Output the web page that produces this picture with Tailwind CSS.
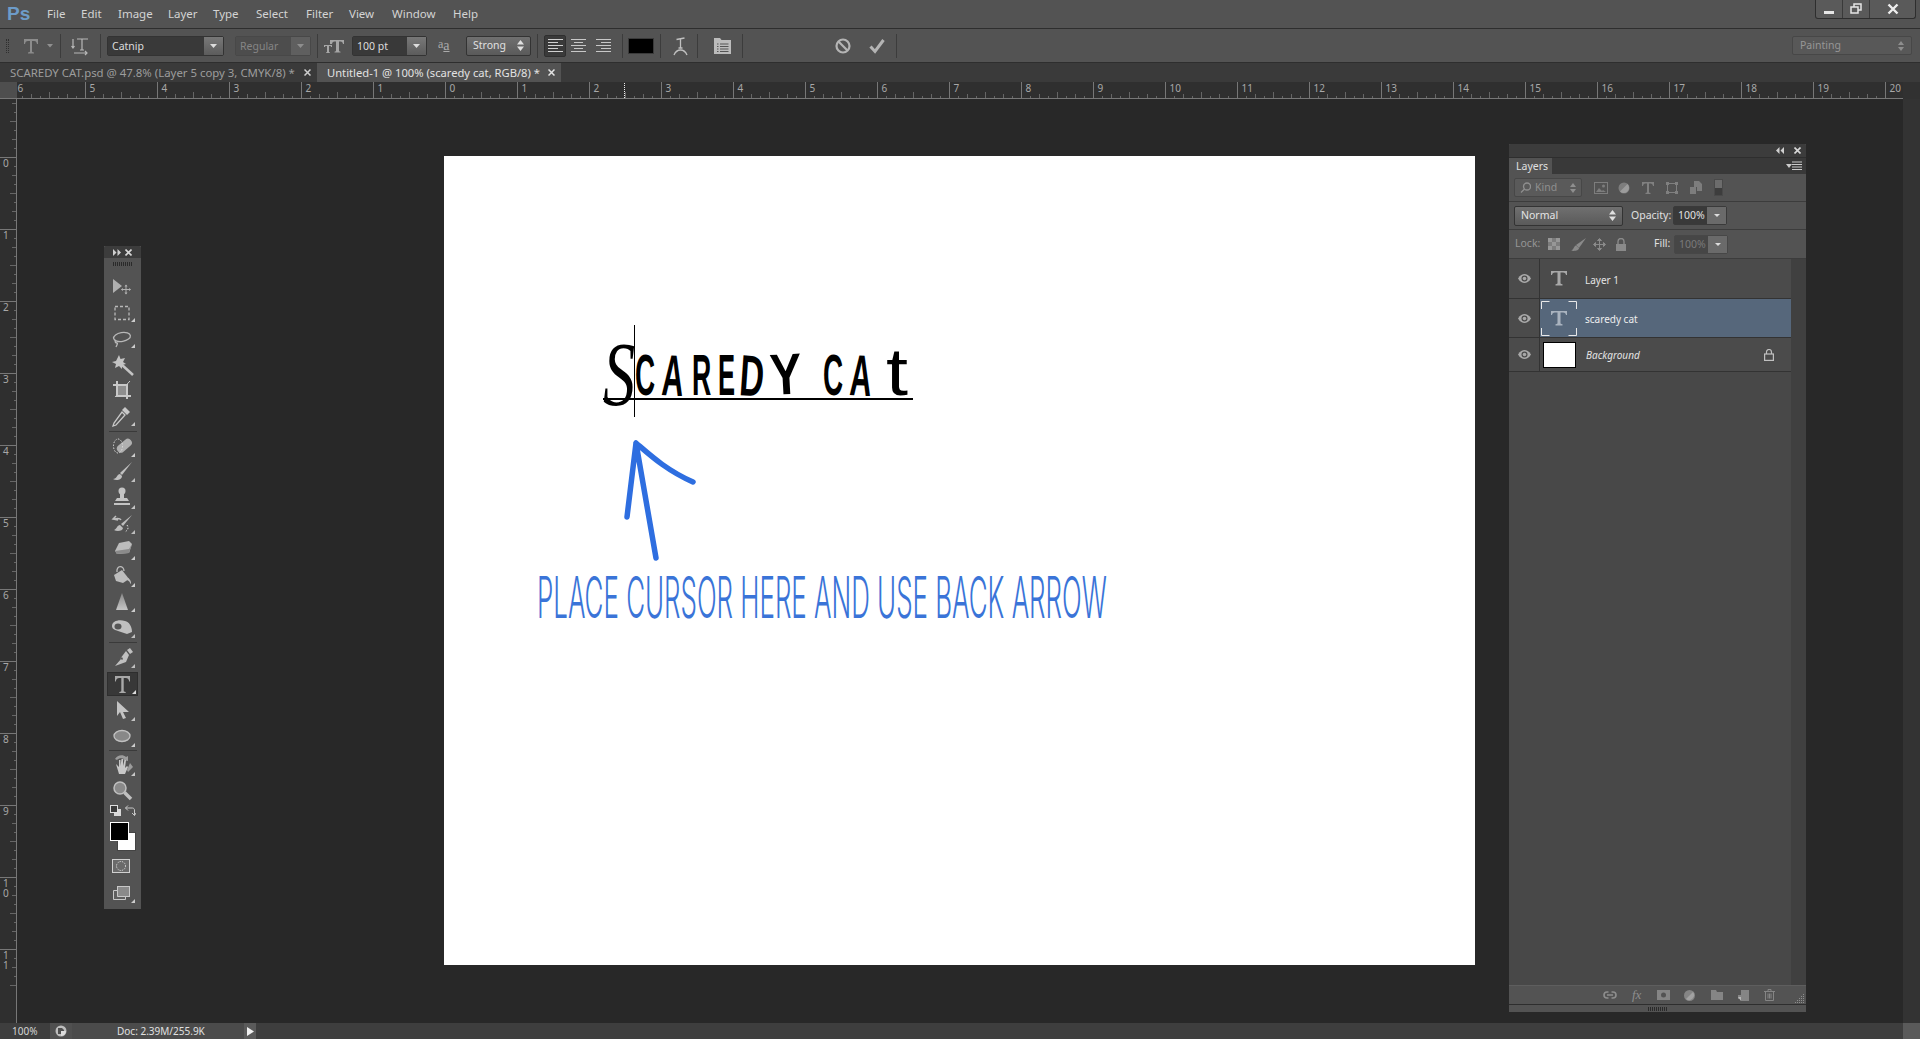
<!DOCTYPE html>
<html lang="en">
<head>
<meta charset="UTF-8">
<title>Photoshop</title>
<script src="https://cdn.jsdelivr.net/npm/@tailwindcss/browser@4"></script>
</head>
<body class="bg-[#282828] overflow-hidden">
<div class="relative w-[1920px] h-[1039px] flex flex-col overflow-hidden font-['Noto_Sans',sans-serif] text-[11px] text-[#d4d4d4]">

  <!-- menu bar -->
  <div class="h-[29px] flex items-center bg-[#535353] border-b border-[#2e2e2e] relative">
    <span class="w-[47px] pl-[7px] text-[19px] font-bold text-[#6d9cc9] font-['Liberation_Sans',sans-serif]">Ps</span>
    <span class="w-[34px] text-[11.5px]">File</span>
    <span class="w-[37px] text-[11.5px]">Edit</span>
    <span class="w-[50px] text-[11.5px]">Image</span>
    <span class="w-[45px] text-[11.5px]">Layer</span>
    <span class="w-[43px] text-[11.5px]">Type</span>
    <span class="w-[50px] text-[11.5px]">Select</span>
    <span class="w-[43px] text-[11.5px]">Filter</span>
    <span class="w-[43px] text-[11.5px]">View</span>
    <span class="w-[61px] text-[11.5px]">Window</span>
    <span class="text-[11.5px]">Help</span>
    <!-- window buttons -->
    <div class="absolute right-[4px] top-0 w-[101px] h-[19px] flex bg-[#5a5a5a] border border-t-0 border-[#2e2e2e] rounded-b-[3px]">
      <div class="w-[27px] flex items-center justify-center border-r border-[#3a3a3a]"><svg width="12" height="12"><rect x="1" y="8" width="10" height="3" fill="#e6e6e6"/></svg></div>
      <div class="w-[27px] flex items-center justify-center border-r border-[#3a3a3a]"><svg width="12" height="12" fill="none" stroke="#e6e6e6" stroke-width="1.5"><rect x="4" y="1" width="7" height="6"/><rect x="1" y="4" width="7" height="6" fill="#5a5a5a"/></svg></div>
      <div class="flex-1 flex items-center justify-center"><svg width="12" height="12" stroke="#eee" stroke-width="2.4"><path d="M1.5 1.5l9 9M10.5 1.5l-9 9"/></svg></div>
    </div>
  </div>

  <!-- options bar -->
  <div class="h-[34px] flex items-center bg-[#535353] border-b border-[#2e2e2e] relative">
    <div class="ml-[6px] w-[3px] h-[14px] border-x border-dotted border-[#2f2f2f]"></div>
    <svg class="ml-[13px]" width="18" height="18" fill="#8c8c8c"><path d="M2 2h14v5h-1c-.4-2-1-3-3-3h-2v10c0 1 .5 1.4 2 1.5v1H6v-1c1.5-.1 2-.5 2-1.500V4H6C4 4 3.400 5 3 7H2z"/></svg>
    <svg class="ml-[7px]" width="6" height="4" fill="#909090"><path d="M0 0h6L3 3.500z"/></svg>
    <div class="ml-[7px] w-px h-[24px] bg-[#3c3c3c]"></div>
    <svg class="ml-[10px]" width="18" height="20" fill="none" stroke="#b8b8b8" stroke-width="1.200"><path d="M6 3h11M11 3v11M9 14h4M2 3v9M.5 10L2 12l1.500-2M3 17h13M14 15l2 2-2 2"/></svg>
    <div class="ml-[11px] w-px h-[24px] bg-[#3c3c3c]"></div>
    <div class="ml-[6px] w-[117px] h-[20px] flex border border-[#333] rounded-[2px]">
      <div class="flex-1 bg-[#393939] pl-[4px] leading-[18px] text-[10.500px] text-[#dcdcdc]">Catnip</div>
      <div class="w-[19px] bg-linear-to-b from-[#787878] to-[#5c5c5c] flex items-center justify-center"><svg width="7" height="4" fill="#ddd"><path d="M0 0h7L3.500 4z"/></svg></div>
    </div>
    <div class="ml-[11px] w-[76px] h-[20px] flex border border-[#484848] rounded-[2px]">
      <div class="flex-1 bg-[#4d4d4d] pl-[4px] leading-[18px] text-[10.500px] text-[#858585]">Regular</div>
      <div class="w-[19px] bg-[#5f5f5f] flex items-center justify-center"><svg width="7" height="4" fill="#8e8e8e"><path d="M0 0h7L3.500 4z"/></svg></div>
    </div>
    <div class="ml-[6px] w-px h-[24px] bg-[#3c3c3c]"></div>
    <svg class="ml-[6px]" width="20" height="18" fill="#a6a6a6"><path d="M6 3h14v4h-1c-.3-1.500-.8-2.500-2.500-2.500H15v9c0 .8.400 1 1.500 1.200v.8h-6v-.8c1.100-.2 1.500-.4 1.500-1.200v-9h-1.500C8.800 4.500 8.300 5.500 8 7H6zM0 8h8v2H7c0-.7-.4-1-1-1H5v6l1 .5v.5H2v-.5l1-.5V9H2c-.6 0-1 .3-1 1H0z"/></svg>
    <div class="ml-[8px] w-[75px] h-[20px] flex border border-[#333] rounded-[2px]">
      <div class="flex-1 bg-[#393939] pl-[4px] leading-[18px] text-[10.500px] text-[#dcdcdc]">100 pt</div>
      <div class="w-[19px] bg-linear-to-b from-[#787878] to-[#5c5c5c] flex items-center justify-center"><svg width="7" height="4" fill="#ddd"><path d="M0 0h7L3.500 4z"/></svg></div>
    </div>
    <span class="ml-[11px] w-[17px] text-[12px] text-[#aaa] font-['Liberation_Serif',serif] whitespace-nowrap"><span class="relative -top-[2px]">a</span><span class="text-[14px] underline">a</span></span>
    <div class="ml-[11px] w-[65px] h-[20px] flex items-center justify-between border border-[#333] rounded-[2px] bg-linear-to-b from-[#707070] to-[#5a5a5a] px-[6px] text-[10.500px] text-[#e0e0e0]">Strong<svg width="7" height="11" fill="#e0e0e0"><path d="M0 4.500h7L3.500 0zM0 6.500h7L3.500 11z"/></svg></div>
    <div class="ml-[6px] w-px h-[24px] bg-[#3c3c3c]"></div>
    <div class="ml-[6px] w-[22px] h-[22px] bg-[#3a3a3a] border border-[#2f2f2f] rounded-[2px] flex items-center justify-center">
      <svg width="15" height="15" stroke="#d0d0d0"><path d="M0 1.500h15M0 4.500h10M0 7.500h15M0 10.500h10M0 13.500h15"/></svg>
    </div>
    <svg class="ml-[5px]" width="15" height="15" stroke="#c8c8c8"><path d="M0 1.500h15M3 4.500h9M0 7.500h15M3 10.500h9M0 13.500h15"/></svg>
    <svg class="ml-[10px]" width="15" height="15" stroke="#c8c8c8"><path d="M0 1.500h15M5 4.500h10M0 7.500h15M5 10.500h10M0 13.500h15"/></svg>
    <div class="ml-[11px] w-px h-[24px] bg-[#3c3c3c]"></div>
    <div class="ml-[5px] w-[26px] h-[16px] bg-black border border-[#3a3a3a]"></div>
    <div class="ml-[6px] w-px h-[24px] bg-[#3c3c3c]"></div>
    <svg class="ml-[12px]" width="15" height="20" fill="none" stroke="#c0c0c0" stroke-width="1.300"><path d="M3.500 3.500l8-1.500M7.500 3v9M5.500 12h4M1 19c1.500-3.500 3.500-5 6.500-5s5 1.500 6.500 5"/></svg>
    <div class="ml-[9px] w-px h-[24px] bg-[#3c3c3c]"></div>
    <svg class="ml-[16px]" width="17" height="17" fill="#bcbcbc"><path d="M0 1h6l1.500 2H17v14H0z"/><path d="M3 7h1.500M3 9.500h1.500M3 12h1.500M3 14.500h1.500M6 7h8.500M6 9.500h8.500M6 12h8.500M6 14.500h8.500" stroke="#555"/></svg>
    <div class="ml-[11px] w-px h-[24px] bg-[#3c3c3c]"></div>
    <svg class="ml-[92px]" width="16" height="16" fill="none" stroke="#b4b4b4" stroke-width="2.200"><circle cx="8" cy="8" r="6.500"/><path d="M3.500 3.500l9 9"/></svg>
    <svg class="ml-[18px]" width="16" height="16" fill="none" stroke="#b4b4b4" stroke-width="3"><path d="M1.500 8.500l4.500 5L14.500 2"/></svg>
    <div class="ml-[11px] w-px h-[24px] bg-[#3c3c3c]"></div>
    <div class="ml-auto mr-[8px] w-[120px] h-[19px] flex items-center justify-between bg-[#585858] border border-[#474747] rounded-[2px] px-[7px] text-[10.500px] text-[#969696]">Painting<svg width="6" height="10" fill="#8e8e8e"><path d="M0 4h6L3 0zM0 6h6L3 10z"/></svg></div>
  </div>

  <!-- document tabs -->
  <div class="h-[19px] flex bg-[#3a3a3a] leading-[19px] shrink-0">
    <div class="w-[317px] pl-[10px] flex text-[#9d9d9d] text-[11.4px]">
      <span class="w-[287px] whitespace-nowrap">SCAREDY CAT.psd @ 47.8% (Layer 5 copy 3, CMYK/8) *</span>
      <svg class="mt-[6px] ml-[7px]" width="7" height="7" stroke="#cfcfcf" stroke-width="1.500"><path d="M.5.500l6 6M6.500.500l-6 6"/></svg>
    </div>
    <div class="w-[244px] pl-[10px] flex bg-[#535353] text-[#e2e2e2] text-[11.2px]">
      <span class="w-[214px] whitespace-nowrap">Untitled-1 @ 100% (scaredy cat, RGB/8) *</span>
      <svg class="mt-[6px] ml-[7px]" width="7" height="7" stroke="#e4e4e4" stroke-width="1.500"><path d="M.5.500l6 6M6.500.500l-6 6"/></svg>
    </div>
  </div>

  <!-- workspace with rulers -->
  <div class="flex-1 flex flex-col min-h-0">
    <div class="h-[17px] flex shrink-0">
      <div class="w-[17px] bg-[#4e4e4e] border-b border-[#777]"></div>
      <svg id="ruler-top" width="1886" height="17" class="bg-[#2f2f2f]"></svg>
      <div class="flex-1 bg-[#313131]"></div>
    </div>
    <div class="flex-1 flex min-h-0">
      <svg id="ruler-left" width="17" height="924" class="bg-[#2f2f2f]"></svg>
      <div class="flex-1 bg-[#282828]"></div>
      <div class="w-[17px] bg-[#333]"></div>
    </div>
  </div>

  <!-- status bar -->
  <div class="h-[16px] flex bg-[#3e3e3e] leading-[16px] text-[10px] shrink-0">
    <span class="w-[50px] pl-[12px]">100%</span>
    <div class="w-[22px] bg-[#505050] flex items-center justify-center"><svg width="12" height="12"><circle cx="6" cy="6" r="5.500" fill="#bdbdbd"/><path d="M3 3h4l2 2v4H3z" fill="#505050"/><path d="M6 6h5a5 5 0 0 1-5 5z" fill="#ddd"/></svg></div>
    <div class="w-[172px] bg-[#4b4b4b] pl-[45px] text-[#e0e0e0]">Doc: 2.39M/255.9K</div>
    <div class="w-[12px] bg-[#5a5a5a] flex items-center justify-center"><svg width="7" height="9" fill="#f0f0f0"><path d="M0 0l7 4.500L0 9z"/></svg></div>
    <div class="flex-1"></div>
    <div class="w-[17px] bg-[#5a5a5a]"></div>
  </div>

  <!-- document -->
  <div class="absolute left-[444px] top-[156px] w-[1031px] h-[809px] bg-white overflow-hidden">
    <div class="absolute left-[159px] top-[162px] flex items-baseline h-[70px] text-black font-['Liberation_Sans',sans-serif] text-[58px] leading-none font-bold">
      <span class="w-[32px] font-['Liberation_Serif',serif] font-normal italic text-[92px] scale-x-[.7] origin-left translate-y-[10px]">S</span>
      <span class="w-[27px] scale-x-[.48] origin-left">C</span>
      <span class="w-[30px] scale-x-[.52] origin-left rotate-[3deg]">A</span>
      <span class="w-[26px] scale-x-[.46] origin-left">R</span>
      <span class="w-[22px] scale-x-[.44] origin-left">E</span>
      <span class="w-[30px] scale-x-[.58] origin-left rotate-[4deg]">D</span>
      <span class="w-[53px] scale-x-[.82] origin-left -rotate-[3deg]">Y</span>
      <span class="w-[27px] scale-x-[.48] origin-left">C</span>
      <span class="w-[36px] scale-x-[.52] origin-left rotate-[3deg]">A</span>
      <span class="scale-x-[1.2] origin-left text-[66px] font-normal">t</span>
    </div>
    <div class="absolute left-[159px] top-[242px] w-[310px] h-[1.500px] bg-black"></div>
    <div class="absolute left-[190px] top-[169px] w-[1px] h-[92px] bg-black"></div>
    <svg class="absolute left-[170px] top-[280px]" width="90" height="130" fill="none" stroke="#2e6ee0" stroke-width="5.500" stroke-linecap="round" stroke-linejoin="round"><path d="M13 81L22 7l20 115M22 7c14 12 30 27 57 39"/></svg>
    <div class="absolute left-[93px] top-[409px] whitespace-nowrap origin-left scale-x-[.4546] font-['Inter',sans-serif] font-light text-[57px] leading-[66px] text-[#3a74d8]">PLACE CURSOR HERE AND USE BACK ARROW</div>
  </div>

  <!-- tools panel -->
  <div class="absolute left-[104px] top-[246px] w-[37px] h-[663px] bg-[#535353] flex flex-col items-center">
    <div class="w-full h-[12px] bg-[#3c3c3c] flex items-center justify-between px-[9px] shrink-0 rounded-t-[2px]">
      <svg width="8" height="7" fill="#cfcfcf"><path d="M0 0l3.500 3.500L0 7zM4.500 0L8 3.500 4.500 7z"/></svg>
      <svg width="7" height="7" stroke="#d8d8d8" stroke-width="1.600"><path d="M.5.500l6 6M6.500.500l-6 6"/></svg>
    </div>
    <div class="mt-[4px] w-[20px] h-[4px] bg-[repeating-linear-gradient(90deg,#2a2a2a_0_1px,transparent_1px_2px)] shrink-0"></div>
    <div class="h-[8px] shrink-0"></div>
    <svg class="shrink-0 -ml-[2px]" width="30" height="26" fill="#b0b0b0"><path d="M6 5l9 7-9 7z"/><path d="M19 11v9M14.500 15.500h9" stroke="#b0b0b0"/><path d="M17.500 12.500L19 10.500l1.500 2zM17.500 18.500L19 20.500l1.500-2zM16 14l-2 1.500 2 1.500zM22 14l2 1.500-2 1.500z"/></svg>
    <svg class="shrink-0 -ml-[2px]" width="30" height="26" fill="none" stroke="#b8b8b8"><rect x="8" y="6.500" width="14" height="13" stroke-width="1.300" stroke-dasharray="3 2"/><path d="M28 22h-4l4-4z" fill="#ccc" stroke="none"/></svg>
    <svg class="shrink-0 -ml-[2px]" width="30" height="26" fill="none" stroke="#b8b8b8" stroke-width="1.300"><ellipse cx="15" cy="11" rx="8.500" ry="4.500" transform="rotate(-10 15 11)"/><path d="M9 14c-2 2 0 3 1 3s0 2-1 4"/><path d="M28 22h-4l4-4z" fill="#ccc" stroke="none"/></svg>
    <svg class="shrink-0 -ml-[2px]" width="30" height="26" fill="#c4c4c4"><path d="M12 3l1.500 4L18 6l-2 4 3 2-4 1 0 4-3-3-4 2 1-4-4-2 4-1z"/><path d="M14 12l12 11" stroke="#c4c4c4" stroke-width="2.500"/></svg>
    <svg class="shrink-0 -ml-[2px]" width="30" height="26" fill="none" stroke="#c8c8c8" stroke-width="2"><path d="M10 3v15h14M6 7h14v14"/><path d="M23 3L8 19" stroke-width="1"/><rect x="11" y="8" width="8" height="9" fill="#8e8e8e" stroke="none"/></svg>
    <svg class="shrink-0 -ml-[2px]" width="30" height="26" fill="#c8c8c8"><path d="M18 3l5 5-3 3-5-5z"/><path d="M15 8l3 3-9 10-3 1 1-3z" fill="none" stroke="#c8c8c8" stroke-width="1.300"/><path d="M28 22h-4l4-4z"/></svg>
    <div class="w-[28px] h-[1px] bg-[#3a3a3a] my-[1px] shrink-0"></div>
    <svg class="shrink-0 -ml-[2px]" width="30" height="26" fill="#b0b0b0"><rect x="9" y="9" width="17" height="8" rx="4" transform="rotate(-40 17 13)"/><ellipse cx="11" cy="13" rx="4.500" ry="7" fill="none" stroke="#ddd" stroke-dasharray="1.500 1.500"/><path d="M28 24h-4l4-4z" fill="#ccc"/></svg>
    <svg class="shrink-0 -ml-[2px]" width="30" height="26" fill="#c0c0c0"><path d="M25 3L13 14l2 2z"/><path d="M13 15c-3 0-3 5-7 5 3 2 9 1 9-3z"/><path d="M28 23h-4l4-4z"/></svg>
    <svg class="shrink-0 -ml-[2px]" width="30" height="26" fill="#c4c4c4"><circle cx="15" cy="6" r="3.500"/><rect x="13" y="8" width="4" height="5"/><path d="M10 13h10l2 3H8z"/><rect x="7" y="18" width="16" height="2"/><path d="M28 24h-4l4-4z"/></svg>
    <svg class="shrink-0 -ml-[2px]" width="30" height="26" fill="#bdbdbd"><path d="M25 4L14 13l2 2z"/><path d="M13 14c-3 0-3 4-6 5 3 2 9 1 9-2z"/><path d="M9 5l-3 3 5 1M7 8c4-1 6-1 7 1" fill="none" stroke="#bdbdbd" stroke-width="1.500"/><path d="M20 14c2 3 1 5-2 7" fill="none" stroke="#ddd" stroke-dasharray="1.500 1.500"/><path d="M28 23h-4l4-4z"/></svg>
    <svg class="shrink-0 -ml-[2px]" width="30" height="26" fill="#bcbcbc"><path d="M12 6l10-2 3 3-3 9-12 1-2-3z"/><path d="M8 14l14-2 3-5-3 9-12 1z" fill="#8a8a8a"/><path d="M28 23h-4l4-4z" fill="#ccc"/></svg>
    <svg class="shrink-0 -ml-[2px]" width="30" height="26" fill="#bdbdbd"><path d="M7 12l8-5 7 9-6 4-7-2z"/><path d="M10 9c-1-7 7-7 7-1" fill="none" stroke="#bdbdbd" stroke-width="1.300"/><path d="M21 15c2 1 3 3 3 5 0 1-1 1-1 0s-1-2-3-3z"/><path d="M28 24h-4l4-4z" fill="#ccc"/></svg>
    <svg class="shrink-0 -ml-[2px]" width="30" height="26"><defs><linearGradient id="g" x1="0" y1="0" x2="0" y2="1"><stop offset="0" stop-color="#888"/><stop offset="1" stop-color="#c6c6c6"/></linearGradient></defs><path d="M15 4l6 17H9z" fill="url(#g)"/><path d="M28 23h-4l4-4z" fill="#ccc"/></svg>
    <svg class="shrink-0 -ml-[2px]" width="30" height="26" fill="#c0c0c0"><path d="M5 11c0-5 7-7 13-5 4 1 7 5 7 11l-5 2-9-3c-3-1-6-2-6-5z"/><ellipse cx="11" cy="11.500" rx="3.500" ry="3" fill="#555"/><path d="M28 23h-4l4-4z"/></svg>
    <div class="w-[28px] h-[1px] bg-[#3a3a3a] mt-[1px] mb-[2px] shrink-0"></div>
    <svg class="shrink-0 -ml-[2px]" width="30" height="26" fill="#c0c0c0"><path d="M23 3l3 4-3 2-3-4z"/><path d="M19 6l3 4-3 7-11 4 6-7 1 1 1-1-1-2-1 1-1 1z"/><path d="M28 23h-4l4-4z"/></svg>
    <div class="relative w-[31px] h-[24px] bg-[#383838] border border-[#2e2e2e] flex items-center justify-center shrink-0 my-[1px]">
      <svg width="29" height="22" fill="#a8a8a8"><path d="M7 3h15v5.500h-.8c-.4-2-1.200-3.500-3.500-3.500h-2v12.500c0 1 .6 1.300 2 1.500v1h-6.400v-1c1.400-.2 2-.5 2-1.500V5h-2c-2.300 0-3.100 1.500-3.500 3.500H7z"/><path d="M28 21h-4l4-4z" fill="#ddd"/></svg>
    </div>
    <svg class="shrink-0 -ml-[2px]" width="30" height="26" fill="#c4c4c4"><path d="M10 4l12 11-6 0 3 6-3 1-3-7-3 4z"/><path d="M28 24h-4l4-4z"/></svg>
    <svg class="shrink-0 -ml-[2px]" width="30" height="26" fill="#888" stroke="#c0c0c0" stroke-width="1.300"><ellipse cx="15" cy="13" rx="8" ry="5.500"/><path d="M28 24h-4l4-4z" fill="#ccc" stroke="none"/></svg>
    <div class="w-[28px] h-[1px] bg-[#3a3a3a] my-[1px] shrink-0"></div>
    <svg class="shrink-0 -ml-[2px]" width="30" height="26" fill="#c8c8c8"><path d="M8 7c2-4 8-5 11-2l2-1v5l-5-1 1-1c-2-1-5-1-7 1zM23 11l3 4-5 5-1-2z" fill="#9c9c9c"/><path d="M9 12l3 3V8h1.500v6l1-7H16v7l1.500-6H19l-1 8 2-2 1 1-3 7h-6z"/><path d="M28 24h-4l4-4z"/></svg>
    <svg class="shrink-0 -ml-[2px]" width="30" height="26" fill="#8a8a8a" stroke="#c0c0c0" stroke-width="1.500"><circle cx="13" cy="10" r="6"/><path d="M17.500 14.500L24 21" stroke-width="3.500"/></svg>
    <div class="mt-[1px] w-[30px] h-[15px] flex justify-between px-[2px] shrink-0">
      <svg width="11" height="11"><rect x="4" y="4" width="7" height="7" fill="#d8d8d8"/><rect x="0.500" y="0.500" width="7" height="7" fill="#3a3a3a" stroke="#ddd"/></svg>
      <svg width="11" height="11" fill="none" stroke="#c8c8c8"><path d="M0.500 3h7c1 0 2 1 2 2v5.500M3 .500L.5 3 3 5.500M7 8l2.500 2.500L11 8"/></svg>
    </div>
    <div class="relative w-[30px] h-[32px] shrink-0 mt-[2px] -ml-[2px]">
      <div class="absolute right-[1px] bottom-[3px] w-[19px] h-[19px] bg-white border border-[#444]"></div>
      <div class="absolute left-[3px] top-0 w-[19px] h-[19px] bg-black border border-white"></div>
    </div>
    <svg class="mt-[1px] -ml-[2px]" width="30" height="22"><rect x="5.500" y="4.500" width="17" height="13" fill="#6a6a6a" stroke="#d0d0d0"/><circle cx="14" cy="11" r="4.500" fill="none" stroke="#e0e0e0" stroke-dasharray="1.200 1.200"/></svg>
    <svg class="mt-[6px] -ml-[2px]" width="30" height="22" fill="#8a8a8a" stroke="#c8c8c8"><rect x="10.500" y="3.500" width="12" height="10"/><path d="M6.500 7.500h4v6h8v3h-12z" fill="#5f5f5f"/><path d="M28 20h-4l4-4z" fill="#ccc" stroke="none"/></svg>
  </div>

  <!-- layers panel -->
  <div class="absolute left-[1509px] top-[144px] w-[297px] h-[868px] flex flex-col bg-[#484848]">
    <div class="h-[13px] bg-[#3c3c3c] flex items-center justify-end gap-[10px] pr-[5px] rounded-t-[2px] shrink-0">
      <svg width="8" height="7" fill="#cfcfcf"><path d="M3.500 0L0 3.500 3.500 7zM8 0L4.500 3.500 8 7z"/></svg>
      <svg width="7" height="7" stroke="#d8d8d8" stroke-width="1.600"><path d="M.5.500l6 6M6.500.500l-6 6"/></svg>
    </div>
    <div class="h-[17px] bg-[#393939] border-t border-[#2e2e2e] flex justify-between shrink-0">
      <div class="w-[43px] bg-[#535353] pl-[7px] leading-[16px] text-[10.500px] text-[#e0e0e0]">Layers</div>
      <svg class="mr-[3px] mt-[3px]" width="17" height="9"><path d="M0 3h6L3 7z" fill="#ccc"/><path d="M6 1h10M6 3.500h10M6 6h10M6 8.500h10" stroke="#ccc"/></svg>
    </div>
    <div class="h-[28px] bg-[#535353] border-b border-[#3c3c3c] flex items-center px-[5px] shrink-0">
      <div class="w-[68px] h-[19px] flex items-center justify-between border border-[#474747] bg-[#5a5a5a] rounded-[2px] px-[5px] text-[10.500px] text-[#8f8f8f]">
        <svg width="11" height="11" fill="none" stroke="#8f8f8f" stroke-width="1.300"><circle cx="7" cy="4.500" r="3.500"/><path d="M4.500 7L1 10.500"/></svg>
        <span class="flex-1 pl-[4px]">Kind</span>
        <svg width="6" height="10" fill="#8f8f8f"><path d="M0 4h6L3 0zM0 6h6L3 10z"/></svg>
      </div>
      <svg class="ml-[12px]" width="14" height="12" fill="none" stroke="#7d7d7d"><rect x=".5" y=".5" width="13" height="11"/><circle cx="9.500" cy="4" r="1.500" fill="#7d7d7d" stroke="none"/><path d="M2 10l3-4 3 3 1-1 3 2z" fill="#7d7d7d" stroke="none"/></svg>
      <svg class="ml-[10px]" width="12" height="12"><circle cx="6" cy="6" r="5.500" fill="#7d7d7d"/><path d="M2 9.500L9.500 2A5 5 0 0 1 2 9.500z" fill="#9c9c9c"/></svg>
      <svg class="ml-[12px]" width="12" height="12" fill="#808080"><path d="M0 0h12v4h-1c-.2-1.500-1-2.500-2.500-2.500H7V10c0 .6.400.8 1.500 1v1h-5v-1c1.100-.2 1.500-.4 1.500-1V1.500H3.500C2 1.500 1.200 2.500 1 4H0z"/></svg>
      <svg class="ml-[12px]" width="12" height="12" fill="#808080" stroke="#808080"><path d="M1.500 1.500h9v9h-9z" fill="none"/><rect x=".5" y=".5" width="2" height="2"/><rect x="9.500" y=".5" width="2" height="2"/><rect x=".5" y="9.500" width="2" height="2"/><rect x="9.500" y="9.500" width="2" height="2"/></svg>
      <svg class="ml-[12px]" width="12" height="13" fill="#7d7d7d"><path d="M4 0h5l3 3v7H7V6H4z"/><rect x="0" y="6" width="6" height="7"/></svg>
      <div class="ml-[12px] w-[9px] h-[17px] bg-linear-to-b from-[#6c6c6c] from-50% to-[#3d3d3d] to-50% border border-[#494949]"></div>
    </div>
    <div class="h-[28px] bg-[#535353] border-b border-[#3c3c3c] flex items-center px-[5px] shrink-0">
      <div class="w-[109px] h-[20px] flex items-center justify-between border border-[#333] rounded-[2px] bg-linear-to-b from-[#707070] to-[#5a5a5a] px-[6px] text-[10.500px] text-[#e4e4e4]">Normal<svg width="7" height="11" fill="#e0e0e0"><path d="M0 4.500h7L3.500 0zM0 6.500h7L3.500 11z"/></svg></div>
      <span class="ml-[8px] w-[42px] text-[10.500px] text-[#e0e0e0] whitespace-nowrap">Opacity:</span>
      <div class="w-[54px] h-[19px] flex border border-[#3a3a3a] rounded-[2px]">
        <div class="flex-1 bg-[#393939] pl-[4px] leading-[17px] text-[10.500px] text-[#e0e0e0]">100%</div>
        <div class="w-[19px] bg-[#6a6a6a] flex items-center justify-center"><svg width="6" height="3" fill="#ddd"><path d="M0 0h6L3 3z"/></svg></div>
      </div>
    </div>
    <div class="h-[29px] bg-[#535353] border-b border-[#3c3c3c] flex items-center pl-[6px] shrink-0">
      <span class="w-[33px] text-[10.500px] text-[#969696]">Lock:</span>
      <svg width="12" height="12"><rect width="12" height="12" fill="#7c7c7c"/><path d="M0 0h4v4H0zM8 0h4v4H8zM4 4h4v4H4zM0 8h4v4H0zM8 8h4v4H8z" fill="#979797"/></svg>
      <svg class="ml-[11px]" width="15" height="13" fill="#8a8a8a"><path d="M15 0L5 7l3 3z"/><path d="M5 7.500C2.500 8 3 12 0 12.500c3 1 8 0 8-2.500z"/></svg>
      <svg class="ml-[7px]" width="13" height="13" fill="#8a8a8a" stroke="#8a8a8a"><path d="M6.500 1v11M1 6.500h11" fill="none"/><path d="M4.500 2.500l2-2 2 2zM4.500 10.500l2 2 2-2zM2.500 4.500l-2 2 2 2zM10.500 4.500l2 2-2 2z"/></svg>
      <svg class="ml-[10px]" width="10" height="13" fill="#8a8a8a"><path d="M0 6h10v7H0z"/><path d="M2 6V3.500a3 3 0 0 1 6 0V6" fill="none" stroke="#8a8a8a" stroke-width="1.400"/></svg>
      <span class="ml-[28px] w-[20px] text-[10.500px] text-[#e0e0e0]">Fill:</span>
      <div class="w-[54px] h-[19px] flex border border-[#474747] rounded-[2px]">
        <div class="flex-1 bg-[#464646] pl-[4px] leading-[17px] text-[10.500px] text-[#7a7a7a]">100%</div>
        <div class="w-[19px] bg-[#6a6a6a] flex items-center justify-center"><svg width="6" height="3" fill="#ddd"><path d="M0 0h6L3 3z"/></svg></div>
      </div>
    </div>

    <div class="flex-1 flex min-h-0">
      <div class="w-[282px] flex flex-col">
        <div class="h-[40px] flex items-center border-b border-[#333] bg-[#4b4b4b] shrink-0">
          <div class="w-[31px] h-full flex items-center justify-center border-r border-[#333]"><svg width="13" height="9" fill="#a8a8a8"><path d="M0 4.500C2 1 4.500 0 6.500 0s4.500 1 6.500 4.500C11 8 8.500 9 6.500 9S2 8 0 4.500z"/><circle cx="6.500" cy="4.500" r="3" fill="#4b4b4b"/><circle cx="6.500" cy="4.500" r="1.800" fill="#a8a8a8"/></svg></div>
          <svg class="ml-[11px]" width="16" height="15" fill="#a8a8a8"><path d="M0 0h16v4h-1c-.3-1.500-1-2.500-3-2.500H9.500V12c0 .8.500 1 2 1.200v1.300h-7v-1.300c1.500-.2 2-.4 2-1.200V1.500H4C2 1.500 1.300 2.500 1 4H0z"/></svg>
          <span class="ml-[18px] mt-[3px] text-[10px] text-[#e4e4e4]">Layer 1</span>
        </div>
        <div class="h-[39px] flex items-center border-b border-[#333] bg-[#56677b] shrink-0">
          <div class="w-[31px] h-full flex items-center justify-center border-r border-[#333] bg-[#4b4b4b]"><svg width="13" height="9" fill="#a8a8a8"><path d="M0 4.500C2 1 4.500 0 6.500 0s4.500 1 6.500 4.500C11 8 8.500 9 6.500 9S2 8 0 4.500z"/><circle cx="6.500" cy="4.500" r="3" fill="#4b4b4b"/><circle cx="6.500" cy="4.500" r="1.800" fill="#a8a8a8"/></svg></div>
          <div class="relative ml-[1px] w-[36px] h-[35px] flex items-center justify-center">
            <svg class="absolute inset-0" width="36" height="35" fill="none" stroke="#e8e8e8"><path d="M.5 8V.5h8M27.500.5h8V8M.5 27v7.500h8M27.500 34.500h8V27"/></svg>
            <svg width="16" height="15" fill="#a9b3bf"><path d="M0 0h16v4h-1c-.3-1.500-1-2.500-3-2.500H9.500V12c0 .8.500 1 2 1.200v1.300h-7v-1.300c1.500-.2 2-.4 2-1.200V1.500H4C2 1.500 1.300 2.500 1 4H0z"/></svg>
          </div>
          <span class="ml-[8px] mt-[2px] text-[10px] text-[#eeeeee]">scaredy cat</span>
        </div>
        <div class="h-[34px] flex items-center border-b border-[#333] bg-[#4b4b4b] shrink-0">
          <div class="w-[31px] h-full flex items-center justify-center border-r border-[#333]"><svg width="13" height="9" fill="#a8a8a8"><path d="M0 4.500C2 1 4.500 0 6.500 0s4.500 1 6.500 4.500C11 8 8.500 9 6.500 9S2 8 0 4.500z"/><circle cx="6.500" cy="4.500" r="3" fill="#4b4b4b"/><circle cx="6.500" cy="4.500" r="1.800" fill="#a8a8a8"/></svg></div>
          <div class="ml-[3px] w-[33px] h-[26px] bg-white border border-black"></div>
          <span class="ml-[10px] mt-[2px] flex-1 text-[10px] italic text-[#e4e4e4]">Background</span>
          <svg class="mr-[17px]" width="10" height="12" fill="none" stroke="#c0c0c0" stroke-width="1.200"><rect x=".6" y="5" width="8.800" height="6.400"/><path d="M2.500 5V3a2.500 2.500 0 0 1 5 0v2"/></svg>
        </div>
      </div>
      <div class="flex-1 bg-[#404040]"></div>
    </div>

    <div class="h-[19px] bg-[#535353] border-t border-[#5e5e5e] flex items-center relative shrink-0">
      <svg class="ml-[94px]" width="14" height="8" fill="none" stroke="#8e8e8e" stroke-width="1.600"><path d="M5.500 1H4a3 3 0 0 0 0 6h1.500M8.500 1H10a3 3 0 0 1 0 6H8.500M4 4h6"/></svg>
      <span class="ml-[15px] w-[12px] font-['Liberation_Serif',serif] italic text-[13px] text-[#8e8e8e]">fx</span>
      <svg class="ml-[13px]" width="13" height="10"><rect width="13" height="10" fill="#858585"/><circle cx="6.500" cy="5" r="2.500" fill="#535353"/></svg>
      <svg class="ml-[14px]" width="11" height="11"><circle cx="5.500" cy="5.500" r="5.500" fill="#858585"/><path d="M2 9L9 2A5 5 0 0 1 2 9z" fill="#a2a2a2"/></svg>
      <svg class="ml-[16px]" width="12" height="10" fill="#858585"><path d="M0 0h5l1 2h6v8H0z"/></svg>
      <svg class="ml-[15px]" width="11" height="11" fill="#858585"><path d="M3 0h8v11H3zM0 5h3v4h-3z"/><path d="M0 7l3 4V7z" fill="#b8b8b8"/></svg>
      <svg class="ml-[15px]" width="11" height="12" fill="none" stroke="#858585"><path d="M0 2.500h11M4 2.500V.5h3v2M1.500 2.500v9h8v-9M4 4.500v5M5.500 4.500v5M7 4.500v5"/></svg>
      <svg class="absolute right-[2px] bottom-[1px]" width="9" height="9" fill="#8e8e8e"><path d="M8 0h1v1H8zM6 2h1v1H6zM8 2h1v1H8zM4 4h1v1H4zM6 4h1v1H6zM8 4h1v1H8zM2 6h1v1H2zM4 6h1v1H4zM6 6h1v1H6zM8 6h1v1H8zM0 8h1v1H0zM2 8h1v1H2zM4 8h1v1H4zM6 8h1v1H6zM8 8h1v1H8z"/></svg>
    </div>
    <div class="h-[8px] bg-[#535353] border-t border-[#2e2e2e] flex items-center justify-center shrink-0">
      <div class="w-[20px] h-[4px] bg-[repeating-linear-gradient(90deg,#2a2a2a_0_1px,transparent_1px_2px)]"></div>
    </div>
  </div>
</div>

<script>
  const NS = 'http://www.w3.org/2000/svg';
  function line(svg, x1, y1, x2, y2, color) {
    const l = document.createElementNS(NS, 'line');
    l.setAttribute('x1', x1); l.setAttribute('y1', y1);
    l.setAttribute('x2', x2); l.setAttribute('y2', y2);
    l.setAttribute('stroke', color);
    svg.appendChild(l);
    return l;
  }
  // digits after the first one stack below it when stacked is set
  function label(svg, x, y, str, stacked) {
    const t = document.createElementNS(NS, 'text');
    t.setAttribute('fill', '#a8a8a8');
    t.setAttribute('font-size', '10');
    t.setAttribute('font-family', 'Noto Sans');
    if (stacked) {
      str.split('').forEach((d, n) => {
        const s = document.createElementNS(NS, 'tspan');
        s.setAttribute('x', x);
        s.setAttribute('y', y + n * 10);
        s.textContent = d;
        t.appendChild(s);
      });
    } else {
      t.setAttribute('x', x); t.setAttribute('y', y);
      t.textContent = str;
    }
    svg.appendChild(t);
  }
  function tickLen(i) {
    if (i % 8 === 0) return 16;
    if (i % 4 === 0) return 6;
    if (i % 2 === 0) return 4;
    return 2;
  }

  // top ruler, 72px per inch, 0 sits at x=445 on the page
  const rulerTop = document.getElementById('ruler-top');
  line(rulerTop, 0, 16.5, 1886, 16.5, '#777');
  for (let i = -48; i <= 160; i++) {
    const x = 445 - 17 + i * 9 + 0.5;
    if (x < -5 || x > 1886) continue;
    line(rulerTop, x, 16 - tickLen(i), x, 16, i % 8 === 0 ? '#777' : '#666');
    if (i % 8 === 0) label(rulerTop, x + 4, 10, String(Math.abs(i / 8)));
  }
  line(rulerTop, 607.5, 1, 607.5, 16, '#eee').setAttribute('stroke-dasharray', '1 1');

  // left ruler, 0 sits at y=157 on the page
  const rulerLeft = document.getElementById('ruler-left');
  line(rulerLeft, 16.5, 0, 16.5, 924, '#777');
  for (let i = -8; i <= 92; i++) {
    const y = 157 - 99 + i * 9 + 0.5;
    if (y < 0 || y > 924) continue;
    line(rulerLeft, 16 - tickLen(i), y, 16, y, i % 8 === 0 ? '#777' : '#666');
    if (i % 8 === 0) label(rulerLeft, 3, y + 9, String(Math.abs(i / 8)), true);
  }
</script>
</body>
</html>
